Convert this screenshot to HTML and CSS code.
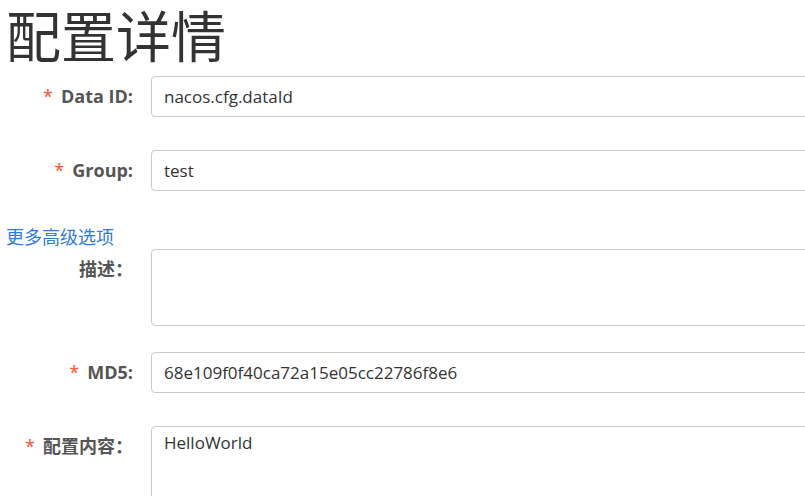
FILE: index.html
```html
<!DOCTYPE html>
<html lang="zh-CN">
<head>
<meta charset="utf-8">
<title>配置详情</title>
<link rel="stylesheet" href="styles.css">
</head>
<body>
<div class="page">
  <h1 class="title">配置详情</h1>
  <div class="row row-dataid">
    <div class="label"><span class="req">*</span>Data ID:</div>
    <div class="control input">nacos.cfg.dataId</div>
  </div>
  <div class="row row-group">
    <div class="label"><span class="req">*</span>Group:</div>
    <div class="control input">test</div>
  </div>
  <a class="more" href="#">更多高级选项</a>
  <div class="row row-desc">
    <div class="label">描述：</div>
    <div class="control textarea desc"></div>
  </div>
  <div class="row row-md5">
    <div class="label"><span class="req">*</span>MD5:</div>
    <div class="control input">68e109f0f40ca72a15e05cc22786f8e6</div>
  </div>
  <div class="row row-content">
    <div class="label"><span class="req">*</span>配置内容：</div>
    <div class="control textarea content">HelloWorld</div>
  </div>
</div>
</body>
</html>
```

FILE: styles.css
```css
html, body {
  margin: 0;
  padding: 0;
  background: #ffffff;
  overflow: hidden;
}
body {
  font-family: "Open Sans", "Noto Sans CJK SC", sans-serif;
  color: #333333;
}
.page {
  width: 1000px;
  padding-left: 6px;
}
.title {
  margin: 0;
  height: 76px;
  font-family: "Noto Sans CJK SC", sans-serif;
  font-weight: 400;
  font-size: 55px;
  line-height: 66px;
  color: #333333;
}
.row {
  display: grid;
  grid-template-columns: 127px 1fr;
  column-gap: 18px;
  align-items: start;
}
.row-dataid { margin-bottom: 33px; }
.row-group { margin-bottom: 0; }
.row-desc { margin-bottom: 26px; }
.row-md5 { margin-bottom: 33px; }
.label {
  text-align: right;
  font-family: "Open Sans", "Noto Sans CJK SC", sans-serif;
  font-weight: 700;
  font-size: 18px;
  line-height: 41px;
  color: #555555;
  white-space: nowrap;
}
.req {
  color: #f5522e;
  font-weight: 400;
  margin-right: 8px;
}
.control {
  box-sizing: border-box;
  border: 1px solid #c8cad1;
  border-radius: 4px;
  background: #ffffff;
  padding: 0 12px;
  font-size: 17px;
  color: #333333;
}
.input {
  height: 41px;
  line-height: 39px;
}
.textarea {
  padding-top: 4px;
  line-height: 24px;
}
.desc { height: 77px; }
.content { height: 110px; }
.more {
  display: block;
  width: max-content;
  margin-top: 34px;
  margin-bottom: 2px;
  font-family: "Noto Sans CJK SC", sans-serif;
  font-size: 18px;
  line-height: 22px;
  color: #2f7bd9;
  text-decoration: none;
}
```
